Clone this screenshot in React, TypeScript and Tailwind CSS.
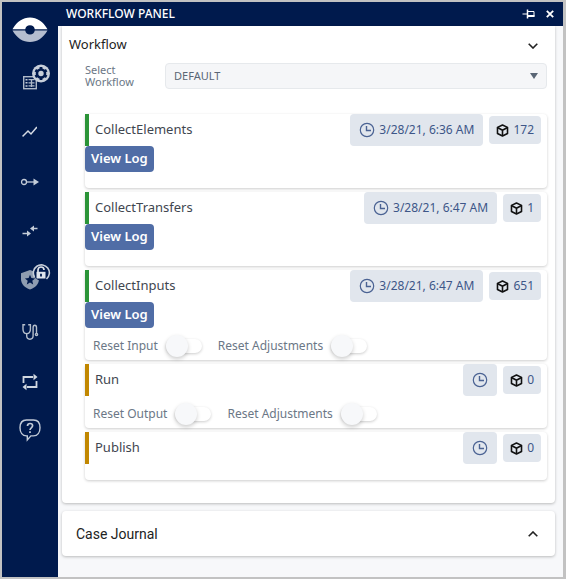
import { ReactNode, useState } from 'react';

interface Step {
  name: string;
  status: 'done' | 'pending';
  finishedAt: string | null;
  count: number;
  hasLog: boolean;
  resets: string[];
}

const steps: Step[] = [
  { name: 'CollectElements', status: 'done', finishedAt: '3/28/21, 6:36 AM', count: 172, hasLog: true, resets: [] },
  { name: 'CollectTransfers', status: 'done', finishedAt: '3/28/21, 6:47 AM', count: 1, hasLog: true, resets: [] },
  { name: 'CollectInputs', status: 'done', finishedAt: '3/28/21, 6:47 AM', count: 651, hasLog: true, resets: ['Reset Input', 'Reset Adjustments'] },
  { name: 'Run', status: 'pending', finishedAt: null, count: 0, hasLog: false, resets: ['Reset Output', 'Reset Adjustments'] },
  { name: 'Publish', status: 'pending', finishedAt: null, count: 0, hasLog: false, resets: [] },
];

function Logo() {
  return (
    <svg width="36" height="26" viewBox="0 0 36 26">
      <path d="M0.5 12.2C5 4.5 11 0.5 18 0.5S31 4.5 35.5 12.2H22.8A4.9 4.9 0 0 0 13.2 12.2Z" fill="#fff" />
      <path d="M0.5 13.6H13.2A4.9 4.9 0 0 0 22.8 13.6H35.5C31 21.5 25 25 18 25S5 21.5 0.5 13.6Z" fill="#b4bdcf" />
    </svg>
  );
}

function CasesIcon() {
  return (
    <svg width="44" height="36" viewBox="-12 1 44 36" fill="none">
      <rect x="3.7" y="13.7" width="12.6" height="12" stroke="#aeb9c8" strokeWidth="1.4" />
      <path d="M5.5 16.7h2M5.500 19.800h2M5.500 22.900h2" stroke="#c3ccd8" strokeWidth="1.5" />
      <path d="M8.500 16.700h6M8.500 19.800h6M8.500 22.900h6M11.500 16v8" stroke="#aeb9c8" strokeWidth="1.3" />
      <circle cx="21" cy="10.500" r="9" fill="#c7cfda" />
      <circle cx="21" cy="10.500" r="4" stroke="#001a4d" strokeWidth="2.600" />
      <path d="M21 3.900v2.500M21 14.600v2.500M15.300 7.200l2.200 1.300M24.500 12.500l2.200 1.300M15.300 13.800l2.200-1.300M24.500 8.500l2.200-1.300" stroke="#001a4d" strokeWidth="2.800" />
    </svg>
  );
}

function TrendIcon() {
  return (
    <svg width="16" height="12" viewBox="0 0 16 12" fill="none" stroke="#d5dbe4" strokeWidth="1.500">
      <path d="M1 10l5-5 3 3 5.500-6.500" />
      <path d="M0.500 10h1M14 1.500h1" />
    </svg>
  );
}

function FlowIcon() {
  return (
    <svg width="20" height="10" viewBox="0 0 20 10" fill="none">
      <circle cx="4" cy="5" r="2.500" stroke="#c3ccd8" strokeWidth="1.300" />
      <path d="M7 5h8" stroke="#c3ccd8" strokeWidth="1.300" />
      <path d="M13.500 1.600L19 5l-5.500 3.400Z" fill="#c3ccd8" />
    </svg>
  );
}

function TransferIcon() {
  return (
    <svg width="16" height="14" viewBox="0 0 16 14" fill="none">
      <path d="M10 3.500h5.500M0.500 8.500H6" stroke="#c3ccd8" strokeWidth="1.500" />
      <path d="M12 0.500v6L8 3.500ZM5 5.500v6l4-3Z" fill="#c3ccd8" />
    </svg>
  );
}

function ShieldIcon() {
  return (
    <svg width="44" height="36" viewBox="-12 1.5 44 36" fill="none">
      <path d="M10 7.500l9 3.300v5.700c0 5.200-3.700 8.500-9 10.500-5.300-2-9-5.300-9-10.500v-5.700Z" fill="#8f9db1" />
      <path d="M10 12.200l1.400 3.400 3.700.3-2.800 2.400.9 3.600-3.200-1.900-3.200 1.900.9-3.600-2.800-2.400 3.700-.3Z" fill="#001a4d" />
      <circle cx="21" cy="10.500" r="7.500" fill="#001a4d" />
      <path d="M14.500 14.500A8 8 0 1 1 26.500 16.500" stroke="#c7cfda" strokeWidth="1.600" />
      <path d="M18 10V7.500a3 3 0 0 1 6 0" stroke="#dfe4ec" strokeWidth="1.700" />
      <rect x="16.500" y="9.300" width="9" height="6.700" fill="#dfe4ec" />
      <path d="M21 11.200v2.800" stroke="#001a4d" strokeWidth="1.800" />
    </svg>
  );
}

function StethoscopeIcon() {
  return (
    <svg width="18" height="18" viewBox="0 0 18 18" fill="none" stroke="#b4becb" strokeWidth="1.400">
      <path d="M4.200 1.700H2v4.500C2 9 3.600 10.600 5.700 10.600S9.400 9 9.400 6.200V1.700H7.200" />
      <path d="M5.700 10.600v2.200c0 2 1.300 3.400 3.200 3.400s3.200-1.400 3.200-3.400V4.500c0-1.500.7-2.300 1.700-2.300s1.700.8 1.700 2.300v6" />
      <circle cx="15.500" cy="11.500" r="1.100" />
    </svg>
  );
}

function RepeatIcon() {
  return (
    <svg width="18" height="18" viewBox="0 0 18 18" fill="none">
      <path d="M2.500 10V4H12M15.500 8v6H6" stroke="#d0d7e0" strokeWidth="1.800" />
      <path d="M12.500 0.800l4 3.200-4 3.200ZM5.500 10.800l-4 3.200 4 3.200Z" fill="#d0d7e0" />
    </svg>
  );
}

function HelpIcon() {
  return (
    <svg width="22" height="26" viewBox="0 0 22 26" fill="none" stroke="#c3ccd8" strokeWidth="1.400">
      <path d="M7.500 1h7C18.500 1 21 3.800 21 8.700s-2.500 8.200-6.500 8.200h-2.600L8.300 21v-4.100H7.500C3.500 16.900 1 13.600 1 8.700S3.500 1 7.500 1Z" />
      <path d="M8.500 7c0-1.600 1-2.500 2.500-2.500s2.600.9 2.600 2.300c0 2-2.600 2-2.600 4.200M11 12.300v1.700" strokeWidth="1.700" />
    </svg>
  );
}

function PinIcon() {
  return (
    <svg width="14" height="10" viewBox="0 0 14 10" fill="none" stroke="#fff">
      <path d="M0.500 5H5" />
      <path d="M5.500 0.500v9" strokeWidth="1.500" />
      <path d="M5.500 2.500H12v5" />
      <path d="M5.500 7H12.500" strokeWidth="2" />
    </svg>
  );
}

function CloseIcon() {
  return (
    <svg width="8" height="8" viewBox="0 0 8 8" stroke="#fff" strokeWidth="1.800">
      <path d="M0.800 0.800l6.400 6.400M7.200 0.800L0.800 7.200" />
    </svg>
  );
}

function ChevronIcon({ up }: { up?: boolean }) {
  return (
    <svg width="10" height="6" viewBox="0 0 10 6" fill="none" stroke="#222" strokeWidth="1.600">
      <path d={up ? 'M0.700 5.300L5 1l4.300 4.300' : 'M0.700 0.700L5 5l4.300-4.300'} />
    </svg>
  );
}

function ClockIcon() {
  return (
    <svg width="16" height="16" viewBox="0 0 16 16" fill="none" stroke="#4a6293" strokeWidth="1.200">
      <circle cx="8" cy="8" r="6.700" />
      <path d="M7.500 4v4.500H12" strokeWidth="1.400" />
    </svg>
  );
}

function CubeIcon() {
  return (
    <svg width="13" height="13" viewBox="0 0 14 14" fill="none" stroke="#111" strokeWidth="1.700" strokeLinejoin="round">
      <path d="M7 1l5.400 2.600v6.600L7 13l-5.400-2.800V3.600Z" />
      <path d="M1.600 3.800L7 6.800l5.400-3M7 6.800V13" />
    </svg>
  );
}

const navItems: { label: string; icon: ReactNode }[] = [
  { label: 'Cases', icon: <CasesIcon /> },
  { label: 'Trends', icon: <TrendIcon /> },
  { label: 'Flow', icon: <FlowIcon /> },
  { label: 'Transfers', icon: <TransferIcon /> },
  { label: 'Security', icon: <ShieldIcon /> },
  { label: 'Diagnostics', icon: <StethoscopeIcon /> },
  { label: 'Sync', icon: <RepeatIcon /> },
  { label: 'Help', icon: <HelpIcon /> },
];

function Sidebar() {
  return (
    <aside className="flex w-14 shrink-0 flex-col items-center bg-[#001a4d] pt-[15px]">
      <Logo />
      <nav className="mt-[14px] flex w-full flex-col">
        {navItems.map((item) => (
          <button key={item.label} aria-label={item.label} className="flex h-[50px] items-center justify-center">
            {item.icon}
          </button>
        ))}
      </nav>
    </aside>
  );
}

function ResetToggle({ label }: { label: string }) {
  const [checked, setChecked] = useState(false);

  return (
    <label className="flex items-center gap-2 text-xs text-[#6b7786]">
      {label}
      <input
        type="checkbox"
        checked={checked}
        onChange={(e) => setChecked(e.target.checked)}
        className="flex h-[14px] w-9 appearance-none items-center rounded-full bg-white shadow-[0_1px_3px_rgba(0,0,0,0.2)] before:size-[22px] before:shrink-0 before:rounded-full before:bg-[#f7f8fa] before:shadow-[0_2px_4px_rgba(0,0,0,0.2)] before:content-[''] checked:justify-end"
      />
    </label>
  );
}

function StepCard({ step }: { step: Step }) {
  const hasResets = step.resets.length > 0;

  return (
    <li className={`rounded bg-white shadow-[0_1px_3px_rgba(0,0,0,0.2)] ${hasResets ? '' : 'pb-4'}`}>
      <div
        className={`flex h-8 items-center gap-[6px] border-l-4 pr-[6px] pl-[6px] ${
          step.status === 'done' ? 'border-[#2b9438]' : 'border-[#c18700]'
        }`}
      >
        <h3 className="flex-1 text-[13px] text-[#3f4650]">{step.name}</h3>
        <span className="flex h-8 items-center gap-1 rounded bg-[#e1e6ed] px-[9px] text-xs text-[#3d5688]">
          <ClockIcon />
          {step.finishedAt}
        </span>
        <span className="flex h-7 items-center gap-1 rounded bg-[#e1e6ed] px-[7px] text-xs text-[#3d5688]">
          <CubeIcon />
          {step.count}
        </span>
      </div>
      {step.hasLog && (
        <button className="block h-[26px] rounded bg-[#506da6] px-[6px] text-[13px] font-semibold text-white">View Log</button>
      )}
      {hasResets && (
        <div className="flex h-8 items-center gap-4 px-2 pt-[3px]">
          {step.resets.map((label) => (
            <ResetToggle key={label} label={label} />
          ))}
        </div>
      )}
    </li>
  );
}

export default function App() {
  return (
    <div className="flex min-h-screen border-2 border-r-[3px] border-[#c2c2c2] bg-[#f7f8fa] font-['Noto_Sans',sans-serif]">
      <Sidebar />
      <div className="flex min-w-0 flex-1 flex-col">
        <header className="flex h-6 items-center gap-[10px] bg-[#001a4d] pr-[9px] pl-2 text-white">
          <h1 className="flex-1 text-xs font-medium">WORKFLOW PANEL</h1>
          <button aria-label="Pin panel">
            <PinIcon />
          </button>
          <button aria-label="Close panel">
            <CloseIcon />
          </button>
        </header>

        <main className="flex flex-col gap-2 pr-2 pl-1">
          <section className="rounded-b bg-white pr-2 pb-[23px] pl-[23px] shadow-[0_1px_3px_rgba(0,0,0,0.25)]">
            <button className="-ml-4 flex h-[37px] w-[calc(100%+16px)] items-center text-[13px] text-[#222]">
              <span className="flex w-full items-baseline justify-between pr-[9px]">
                Workflow
                <ChevronIcon />
              </span>
            </button>
            <div className="flex items-center gap-4">
              <label htmlFor="workflow" className="w-16 text-[11px] leading-3 text-[#6b7786]">
                Select Workflow
              </label>
              <div className="relative flex-1">
                <select
                  id="workflow"
                  className="block h-[26px] w-full appearance-none rounded-sm border border-[#e6e9ec] bg-[#f5f6f8] px-2 text-[11px] text-[#5a6675]"
                >
                  <option>DEFAULT</option>
                </select>
                <svg width="8" height="6" viewBox="0 0 8 6" className="pointer-events-none absolute top-[10px] right-[9px]">
                  <path d="M0 0h8L4 6Z" fill="#5a6675" />
                </svg>
              </div>
            </div>
            <ul className="mt-[25px] flex flex-col gap-1">
              {steps.map((step) => (
                <StepCard key={step.name} step={step} />
              ))}
            </ul>
          </section>

          <section className="rounded bg-white shadow-[0_1px_3px_rgba(0,0,0,0.25)]">
            <button className="flex h-[45px] w-full items-center justify-between pr-[17px] pl-[14px] font-['Roboto',sans-serif] text-sm text-[#222]">
              Case Journal
              <ChevronIcon up />
            </button>
          </section>
        </main>
      </div>
    </div>
  );
}
